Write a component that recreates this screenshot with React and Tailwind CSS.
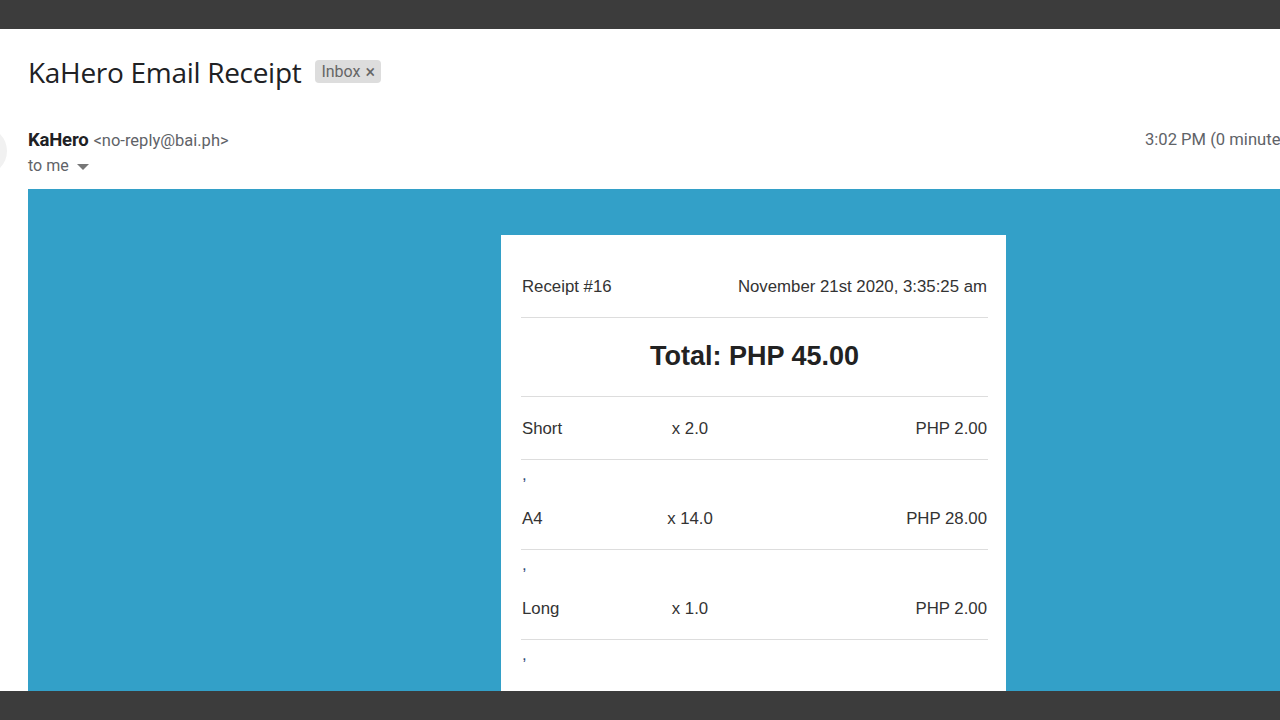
export default function App() {
  const items = [
    { name: "Short", qty: "x 2.0", price: "PHP 2.00" },
    { name: "A4", qty: "x 14.0", price: "PHP 28.00" },
    { name: "Long", qty: "x 1.0", price: "PHP 2.00" },
  ];
  return (
    <div className="w-[1280px] h-[720px] overflow-hidden flex flex-col bg-white">
      <div className="h-[29px] shrink-0 bg-[#3c3c3c]" />
      <div className="flex-1 overflow-hidden relative">
        <div className="absolute left-[-41px] top-[98px] w-[48px] h-[48px] rounded-full bg-[#f1f1f1]" />
        <div className="w-[1479px] pl-[28px]">
          <div className="mt-[25px] h-[36px] flex items-center gap-[14px]">
            <span className="text-[28px] leading-[36px] text-[#202124] font-['Open_Sans',sans-serif] tracking-[-0.3px]">
              KaHero Email Receipt
            </span>
            <span className="h-[23px] px-[6px] rounded-[4px] bg-[#dddddd] text-[#666666] text-[16px] leading-[23px] font-['Roboto',sans-serif] flex items-center gap-[5px] mt-[-2px]">
              Inbox<span className="text-[18px] leading-[23px]">×</span>
            </span>
          </div>
          <div className="mt-[39px] flex font-['Roboto',sans-serif]">
            <div className="flex-1 flex items-baseline h-[22px]">
              <span className="text-[18.5px] leading-[22px] font-bold text-[#202124] tracking-[-0.2px]">KaHero</span>
              <span className="ml-[5px] text-[16.5px] leading-[22px] text-[#5f6368]">&lt;no-reply@bai.ph&gt;</span>
            </div>
            <div className="w-[334px] shrink-0 text-[16.6px] leading-[22px] text-[#5f6368] whitespace-nowrap">
              3:02 PM (0 minutes ago)
            </div>
          </div>
          <div className="mt-[5px] h-[20px] flex items-center font-['Roboto',sans-serif] text-[16px] leading-[20px] text-[#5f6368]">
            to me
            <span className="ml-[8px] mt-[2px] w-0 h-0 border-l-[6px] border-r-[6px] border-t-[6px] border-l-transparent border-r-transparent border-t-[#777777]" />
          </div>
          <div className="mt-[13px] h-[520px] bg-[#33a0c8] pt-[46px]">
            <div className="w-[505px] mx-auto bg-white pl-[20px] pr-[18px] h-[480px] font-['Liberation_Sans',Arial,sans-serif] text-[#333333] text-[16.8px]">
              <div className="pt-[42px] pb-[20px] leading-[20px] flex justify-between px-[1px] border-b border-[#dddddd]">
                <span>Receipt #16</span>
                <span>November 21st 2020, 3:35:25 am</span>
              </div>
              <div className="pt-[23px] pb-[25px] leading-[30px] text-center text-[27px] font-bold text-[#222222] border-b border-[#dddddd]">
                Total: PHP 45.00
              </div>
              {items.map((it, i) => (
                <div key={i}>
                  <div className="pt-[22px] pb-[20px] leading-[20px] grid grid-cols-[120px_96px_1fr] px-[1px] border-b border-[#dddddd]">
                    <span>{it.name}</span>
                    <span className="text-center">{it.qty}</span>
                    <span className="text-right">{it.price}</span>
                  </div>
                  <div className="h-[27px] pt-[5px] leading-[20px] px-[1px] text-[#2b4a7a]">,</div>
                </div>
              ))}
            </div>
          </div>
        </div>
      </div>
      <div className="h-[29px] shrink-0 bg-[#3c3c3c]" />
    </div>
  );
}
